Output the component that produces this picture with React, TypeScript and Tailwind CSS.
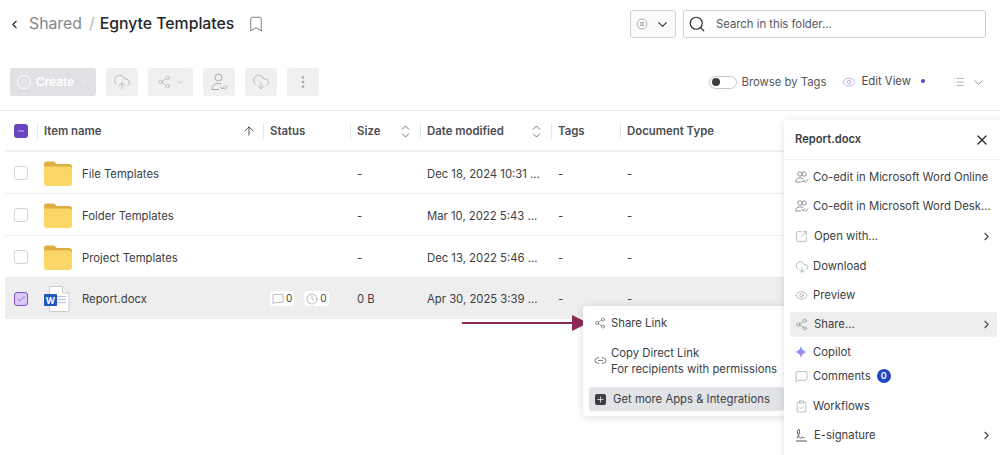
import type { ReactNode } from "react";
import { ChevronDown, ChevronLeft, ChevronRight, ArrowUp, Bookmark, Search, X, Plus, CloudUpload, CloudDownload, Share2, EllipsisVertical, Eye, List, MessageSquare, Clock, SquareArrowOutUpRight, ClipboardCheck, Check, Minus, Link2 } from "lucide-react";

const cols = "grid grid-cols-[32px_226px_87px_70px_131px_69px_1fr]";

function ToolButton({ children, wide }: { children: ReactNode; wide?: boolean }) {
  return (
    <div className={`flex h-[28px] items-center justify-center gap-1 rounded-[3px] bg-[#f0f0f1] text-[#a9abaf] ${wide ? "w-[45px]" : "w-[32px]"}`}>
      {children}
    </div>
  );
}

function FolderIcon() {
  return (
    <svg width="28" height="25" viewBox="0 0 28 25" className="shrink-0">
      <path d="M0 3a2.500 2.500 0 0 1 2.500-2.500h7.500l3 2.500h12a3 3 0 0 1 3 3v4H0z" fill="#dcae45" />
      <path d="M0 5.500h25a3 3 0 0 1 3 3V22a3 3 0 0 1-3 3H3a3 3 0 0 1-3-3z" fill="#f9d667" />
    </svg>
  );
}

function WordIcon() {
  return (
    <svg width="26" height="26" viewBox="0 0 26 26" className="shrink-0">
      <path d="M5.500.500h13l6.500 6.500v18.500H5.500z" fill="#fff" stroke="#c9ccd1" />
      <path d="M18.500.500V7H25" fill="#f3f4f6" stroke="#c9ccd1" />
      <rect x="13" y="10" width="9" height="1.200" fill="#b9c8e8" />
      <rect x="13" y="13" width="9" height="1.200" fill="#b9c8e8" />
      <rect x="13" y="16" width="9" height="1.200" fill="#b9c8e8" />
      <rect x="0" y="8" width="13" height="12" rx="1" fill="#2257bd" />
      <text x="6.500" y="17.500" textAnchor="middle" fontSize="9" fontWeight="700" fill="#fff" fontFamily="Inter, sans-serif">W</text>
    </svg>
  );
}

function SortIcon() {
  return (
    <svg width="9" height="13" viewBox="0 0 9 13" fill="none" stroke="#66686c" strokeWidth="0.900" className="mr-[3px]">
      <path d="M1 4.500L4.500 1 8 4.500" />
      <path d="M1 8.500L4.500 12 8 8.500" />
    </svg>
  );
}

function UserCheckIcon() {
  return (
    <svg width="17" height="18" viewBox="0 0 17 18" fill="none" stroke="currentColor" strokeWidth="1">
      <circle cx="7.500" cy="4.500" r="3.500" />
      <path d="M1 16.500c0-3.500 2-6 6.500-6 1 0 2 .2 2.800.5" />
      <path d="M1 16.500h7" />
      <path d="M9 14l2 2 3-3.500M12.500 15.500l1 1 3-3.500" />
    </svg>
  );
}

function CoEditIcon() {
  return (
    <svg width="14" height="13" viewBox="0 0 14 13" fill="none" stroke="#84868a" strokeWidth="0.900">
      <circle cx="5" cy="3" r="2.200" />
      <circle cx="9" cy="3" r="2.200" />
      <path d="M.7 11c0-2.500 1.500-4.200 4.300-4.200 1.500 0 2.600.5 3.300 1.300" />
      <path d="M.7 11h5.300" />
      <path d="M6.500 9.500l1.500 1.500 2-2.500M9.500 10.500l1 1 2.500-3" />
    </svg>
  );
}

function HeaderCell({ label, sort }: { label: string; sort?: ReactNode }) {
  return (
    <div className="flex h-[15px] items-center justify-between border-l border-[#e4e5e7] pl-[6px] pr-[7px] text-[11.400px] font-semibold text-[#4b4d52]">
      <span className="pt-[2px]">{label}</span>
      {sort}
    </div>
  );
}

function Row({ name, icon, date, size, selected, status }: { name: string; icon: ReactNode; date: string; size: string; selected?: boolean; status?: boolean }) {
  return (
    <div className={`${cols} h-[42px] items-center border-b text-[11.300px] text-[#3c3e43] ${selected ? "-mt-[1px] border-transparent bg-[#eeeeee] pt-[2px]" : "border-[#eeeff0] pt-[1px]"}`}>
      <div className="flex pl-[9px]">
        {selected ? (
          <div className="flex h-[14px] w-[14px] items-center justify-center rounded-[3px] border border-[#7c55cf] bg-[#d9c9f4]">
            <Check size={10} strokeWidth={1.500} className="text-[#6a45bd]" />
          </div>
        ) : (
          <div className="h-[14px] w-[14px] rounded-[3px] border border-[#d4d5d8] bg-white" />
        )}
      </div>
      <div className="flex items-center pl-[7px]">
        <div className="flex w-[38px] shrink-0">{icon}</div>
        <span className="pt-[2px]">{name}</span>
      </div>
      <div className="flex items-center gap-[10px] pl-[7px]">
        {status && (
          <>
            <span className="flex items-center gap-[2px] rounded-[3px] bg-white px-[2px] text-[10px]">
              <MessageSquare size={12} strokeWidth={1} className="text-[#777]" />0
            </span>
            <span className="flex items-center gap-[2px] rounded-[3px] bg-white px-[2px] text-[10px]">
              <Clock size={12} strokeWidth={1} className="text-[#777]" />0
            </span>
          </>
        )}
      </div>
      <div className="pl-[7px] pt-[2px]">{size}</div>
      <div className="pl-[7px] pt-[2px]">{date}</div>
      <div className="pl-[7px] pt-[2px]">-</div>
      <div className="pl-[7px] pt-[2px]">-</div>
    </div>
  );
}

function PanelItem({ icon, label, arrow, active, extra, wideIcon, h }: { icon: ReactNode; label: string; arrow?: boolean; active?: boolean; extra?: ReactNode; wideIcon?: boolean; h: string }) {
  return (
    <div className={`flex items-center rounded-[3px] pl-[5px] pr-[4px] text-[11.300px] text-[#3c3e43] ${h} ${active ? "mt-[2px] bg-[#eeeeee]" : ""}`}>
      <div className={`flex shrink-0 items-center text-[#84868a] ${wideIcon ? "w-[19px]" : "w-[18px]"}`}>{icon}</div>
      <span className="whitespace-nowrap">{label}</span>
      {extra}
      {arrow && <ChevronRight size={13} className="ml-auto text-[#45474b]" />}
    </div>
  );
}

function CopilotIcon() {
  return (
    <svg width="12" height="12" viewBox="0 0 12 12">
      <defs>
        <linearGradient id="copilot" x1="0" y1="0" x2="0" y2="1">
          <stop offset="0" stopColor="#5f9cf5" />
          <stop offset="1" stopColor="#c77fe0" />
        </linearGradient>
      </defs>
      <path d="M6 0c.6 3.300 2.500 5.300 6 6-3.500.7-5.400 2.700-6 6-.6-3.300-2.500-5.300-6-6 3.500-.7 5.400-2.700 6-6z" fill="url(#copilot)" />
    </svg>
  );
}

function SignIcon() {
  return (
    <svg width="13" height="14" viewBox="0 0 13 14" fill="none" stroke="#55575b" strokeWidth="1">
      <path d="M1 13h11" />
      <path d="M2 10.500C4 7 5 4 4.500 2 3.500.5 2 2 2.500 5c.3 2 1.500 4 3 5.500 1-1.500 1.500-2 2-1 .3.800 1 .8 2-.5" />
    </svg>
  );
}

export default function App() {
  return (
    <div className="relative h-[455px] w-[1000px] overflow-hidden bg-white font-['Inter',sans-serif]">
      {/* top bars */}
      <div className="h-[111px] border-b border-[#e9eaeb]">
        <div className="flex h-[48px] items-center pl-[8px] pr-[14px]">
          <ChevronLeft size={13} strokeWidth={2.200} className="text-[#2e3034]" />
          <span className="ml-[8px] text-[15.800px] text-[#85878b]">Shared</span>
          <span className="ml-[7px] text-[15.800px] text-[#b4b6b9]">/</span>
          <span className="ml-[5px] text-[15.800px] font-medium text-[#25272b]">Egnyte Templates</span>
          <Bookmark size={18} strokeWidth={1} className="ml-[13px] text-[#55575b]" />
          <div className="ml-auto flex h-[28px] w-[46px] items-center justify-center gap-[7px] rounded-[3px] border border-[#cfd0d3] bg-[#fafafa]">
            <svg width="12" height="12" viewBox="0 0 12 12" fill="none" stroke="#9a9ca0" strokeWidth="0.800">
              <circle cx="6" cy="6" r="5" />
              <path d="M4 4.500h4M4 6h4M4 7.500h4" />
            </svg>
            <ChevronDown size={15} strokeWidth={1.800} className="text-[#2e3034]" />
          </div>
          <div className="ml-[7px] flex h-[28px] w-[303px] items-center rounded-[3px] border border-[#cfd0d3] pl-[4px] text-[11.300px] text-[#55575b]">
            <Search size={18} strokeWidth={1.600} className="text-[#2e3034]" />
            <span className="ml-[10px]">Search in this folder...</span>
          </div>
        </div>
        <div className="mt-[20px] flex h-[28px] items-center pl-[10px] pr-[14px]">
          <div className="flex h-[28px] w-[86px] items-center justify-center gap-[5px] rounded-[3px] bg-[#dfe1e5] text-[12px] font-semibold text-white">
            <div className="flex h-[14px] w-[14px] items-center justify-center rounded-full border border-white">
              <Plus size={10} strokeWidth={1} />
            </div>
            Create
            <ChevronDown size={10} strokeWidth={1.500} />
          </div>
          <div className="ml-[10px] flex gap-[10px]">
            <ToolButton>
              <CloudUpload size={18} strokeWidth={1} />
            </ToolButton>
            <ToolButton wide>
              <Share2 size={14} strokeWidth={1} />
              <ChevronDown size={10} strokeWidth={1.500} />
            </ToolButton>
            <ToolButton>
              <UserCheckIcon />
            </ToolButton>
            <ToolButton>
              <CloudDownload size={18} strokeWidth={1} />
            </ToolButton>
            <ToolButton>
              <EllipsisVertical size={16} strokeWidth={2} />
            </ToolButton>
          </div>
          <div className="ml-auto flex h-[13px] w-[28px] items-center rounded-full border border-[#c4c6c9] pl-[2px]">
            <div className="h-[8px] w-[8px] rounded-full bg-[#3b3d41]" />
          </div>
          <span className="ml-[5px] text-[11.300px] text-[#55575b]">Browse by Tags</span>
          <Eye size={14} strokeWidth={1.200} className="ml-[15px] text-[#a894e0]" />
          <span className="ml-[6px] -translate-y-[1px] text-[11.300px] text-[#4b4d52]">Edit View</span>
          <div className="ml-[10px] h-[4px] w-[4px] -translate-y-[1px] rounded-full bg-[#5a3fc0]" />
          <List size={12} strokeWidth={1} className="ml-[28px] text-[#6f7175]" />
          <ChevronDown size={15} strokeWidth={1.200} className="ml-[6px] text-[#6f7175]" />
        </div>
      </div>

      {/* table */}
      <div className="pl-[5px]">
        <div className={`${cols} h-[41px] items-center border-b-2 border-[#eeeff0] pt-[1px]`}>
          <div className="flex pl-[9px]">
            <div className="flex h-[14px] w-[14px] items-center justify-center rounded-[3px] bg-[#6a45c2]">
              <Minus size={10} strokeWidth={1.500} className="text-white" />
            </div>
          </div>
          <HeaderCell label="Item name" sort={<ArrowUp size={14} strokeWidth={1.500} className="text-[#3c3e43]" />} />
          <HeaderCell label="Status" />
          <HeaderCell label="Size" sort={<SortIcon />} />
          <HeaderCell label="Date modified" sort={<SortIcon />} />
          <HeaderCell label="Tags" />
          <HeaderCell label="Document Type" />
        </div>
        <Row name="File Templates" icon={<FolderIcon />} size="-" date="Dec 18, 2024 10:31 ..." />
        <Row name="Folder Templates" icon={<FolderIcon />} size="-" date="Mar 10, 2022 5:43 ..." />
        <Row name="Project Templates" icon={<FolderIcon />} size="-" date="Dec 13, 2022 5:46 ..." />
        <Row name="Report.docx" icon={<WordIcon />} size="0 B" date="Apr 30, 2025 3:39 ..." selected status />
      </div>

      {/* annotation arrow */}
      <svg width="126" height="16" viewBox="0 0 126 16" className="absolute left-[462px] top-[315px]">
        <path d="M0 7h112v2H0z" fill="#8a2a55" />
        <path d="M110 0l16 8-16 8z" fill="#8a2a55" />
      </svg>

      {/* share submenu */}
      <div className="absolute left-[583px] top-[306px] w-[207px] rounded-[4px] bg-white p-[6px] pb-[5px] text-[11.300px] text-[#3c3e43] shadow-[0_1px_8px_rgba(0,0,0,0.14)]">
        <div className="flex h-[22px] items-center pl-[5px]">
          <Share2 size={12} strokeWidth={1.200} className="text-[#55575b]" />
          <span className="ml-[5px]">Share Link</span>
        </div>
        <div className="flex h-[53px] items-center pl-[5px]">
          <Link2 size={13} strokeWidth={1.400} className="text-[#55575b]" />
          <span className="ml-[4px] whitespace-nowrap leading-[16px]">
            Copy Direct Link
            <br />
            For recipients with permissions
          </span>
        </div>
        <div className="flex h-[24px] items-center rounded-[3px] bg-[#e2e3e6] pl-[6px]">
          <div className="flex h-[11px] w-[11px] items-center justify-center rounded-[2px] bg-[#3c3e43]">
            <Plus size={9} strokeWidth={2} className="text-white" />
          </div>
          <span className="ml-[7px] whitespace-nowrap">Get more Apps &amp; Integrations</span>
        </div>
      </div>

      {/* details panel */}
      <div className="absolute left-[784px] top-[120px] h-[340px] w-[216px] rounded-tl-[4px] bg-white shadow-[0_1px_8px_rgba(0,0,0,0.12)]">
        <div className="flex h-[40px] items-center justify-between border-b border-[#eeeff0] pl-[11px] pr-[10px] text-[11.200px] font-semibold text-[#3c3e43]">
          Report.docx
          <X size={16} strokeWidth={2} className="text-[#2e3034]" />
        </div>
        <div className="pl-[6px] pr-[3px] pt-[3px]">
          <PanelItem h="h-[28px]" icon={<CoEditIcon />} label="Co-edit in Microsoft Word Online" />
          <PanelItem h="h-[30px]" icon={<CoEditIcon />} label="Co-edit in Microsoft Word Desk..." />
          <PanelItem h="h-[31px]" wideIcon icon={<SquareArrowOutUpRight size={13} strokeWidth={1} />} label="Open with..." arrow />
          <PanelItem h="h-[29px]" icon={<CloudDownload size={14} strokeWidth={1} />} label="Download" />
          <PanelItem h="h-[29px]" icon={<Eye size={13} strokeWidth={1} />} label="Preview" />
          <PanelItem h="h-[25px]" wideIcon icon={<Share2 size={13} strokeWidth={1.200} />} label="Share..." arrow active />
          <PanelItem h="h-[30px]" icon={<CopilotIcon />} label="Copilot" />
          <PanelItem
            h="h-[18px]"
            icon={<MessageSquare size={13} strokeWidth={1} />}
            label="Comments"
            extra={<span className="ml-[6px] flex h-[14px] w-[14px] items-center justify-center rounded-full bg-[#1f48c4] text-[9px] font-semibold text-white">0</span>}
          />
          <PanelItem h="h-[42px]" icon={<ClipboardCheck size={13} strokeWidth={1} />} label="Workflows" />
          <PanelItem h="h-[16px]" wideIcon icon={<SignIcon />} label="E-signature" arrow />
        </div>
      </div>
    </div>
  );
}
